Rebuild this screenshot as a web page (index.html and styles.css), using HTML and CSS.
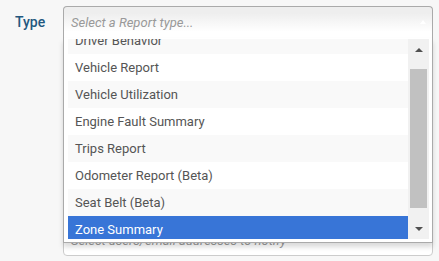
FILE: index.html
```html
<!DOCTYPE html>
<html lang="en">
<head>
    <meta charset="UTF-8">
    <title>Report type</title>
    <link rel="stylesheet" href="styles.css">
</head>
<body>
    <div class="form-row">
        <label class="form-label">Type</label>
        <div class="chosen-container">
            <div class="chosen-single">
                <span class="placeholder">Select a Report type...</span>
                <span class="drop-arrow"></span>
            </div>
            <div class="chosen-drop">
                <div class="results">
                    <ul class="result-list">
                        <li class="odd">Driver Behavior</li>
                        <li>Vehicle Report</li>
                        <li class="odd">Vehicle Utilization</li>
                        <li>Engine Fault Summary</li>
                        <li class="odd">Trips Report</li>
                        <li>Odometer Report (Beta)</li>
                        <li class="odd">Seat Belt (Beta)</li>
                        <li class="selected">Zone Summary</li>
                    </ul>
                    <div class="scrollbar">
                        <div class="scroll-btn"><span class="tri up"></span></div>
                        <div class="scroll-track"><div class="scroll-thumb"></div></div>
                        <div class="scroll-btn"><span class="tri down"></span></div>
                    </div>
                </div>
            </div>
        </div>
    </div>
    <div class="form-row notify-row">
        <div class="form-label"></div>
        <div class="notify-input">
            <span class="placeholder">Select users/email addresses to notify</span>
        </div>
    </div>
</body>
</html>
```
FILE: styles.css
```css
body {
    font-family: Roboto, "Liberation Sans", sans-serif;
    background-color: #f7f7f7;
    margin: 0;
    padding: 6px 0 0 0;
    font-size: 13px;
    color: #555;
}

.form-row {
    display: flex;
    align-items: flex-start;
}

.form-label {
    width: 63px;
    box-sizing: border-box;
    padding-left: 15px;
    line-height: 32px;
    font-size: 14px;
    font-weight: 500;
    color: #23577f;
}

.chosen-container {
    position: relative;
    width: 370px;
    z-index: 2;
}

.chosen-single {
    height: 32px;
    box-sizing: border-box;
    border: 1px solid #aaa;
    border-bottom: none;
    border-radius: 4px 4px 0 0;
    background: linear-gradient(#eee 20%, #fff 80%);
    display: flex;
    align-items: center;
    padding-left: 7px;
    position: relative;
}

.placeholder {
    font-style: italic;
    color: #999;
}

.drop-arrow {
    position: absolute;
    right: 6px;
    top: 13px;
    width: 0;
    height: 0;
    border-left: 3px solid transparent;
    border-right: 3px solid transparent;
    border-bottom: 4px solid #fff;
}

.chosen-drop {
    position: absolute;
    top: 32px;
    left: 0;
    right: 0;
    background: #fff;
    border: 1px solid #aaa;
    border-top: none;
    box-shadow: 0 4px 5px rgba(0, 0, 0, 0.15);
    padding: 1px 3px 3px 4px;
}

.results {
    display: flex;
    height: 200px;
    overflow: hidden;
}

.result-list {
    flex: 1;
    list-style: none;
    margin: -12px 0 0 0;
    padding: 0;
}

.result-list li {
    height: 27px;
    line-height: 27px;
    padding-left: 7px;
    background: #fff;
    white-space: nowrap;
}

.result-list li.odd {
    background: #f9f9f9;
}

.result-list li.selected {
    background: #3875d7;
    color: #fff;
}

.scrollbar {
    width: 21px;
    background: #f1f1f1;
    display: flex;
    flex-direction: column;
}

.scroll-btn {
    height: 21px;
    display: flex;
    align-items: center;
    justify-content: center;
}

.scroll-track {
    flex: 1;
    padding: 9px 2px 10px 2px;
}

.scroll-thumb {
    height: 100%;
    background: #c1c1c1;
}

.tri {
    width: 0;
    height: 0;
    border-left: 4px solid transparent;
    border-right: 4px solid transparent;
}

.tri.up {
    border-bottom: 4px solid #505050;
}

.tri.down {
    border-top: 4px solid #505050;
}

.notify-row {
    margin-top: 186px;
}

.notify-input {
    width: 370px;
    height: 32px;
    box-sizing: border-box;
    border: 1px solid #ccc;
    border-radius: 4px;
    background: #fff;
    display: flex;
    align-items: center;
    padding-left: 7px;
}
```
